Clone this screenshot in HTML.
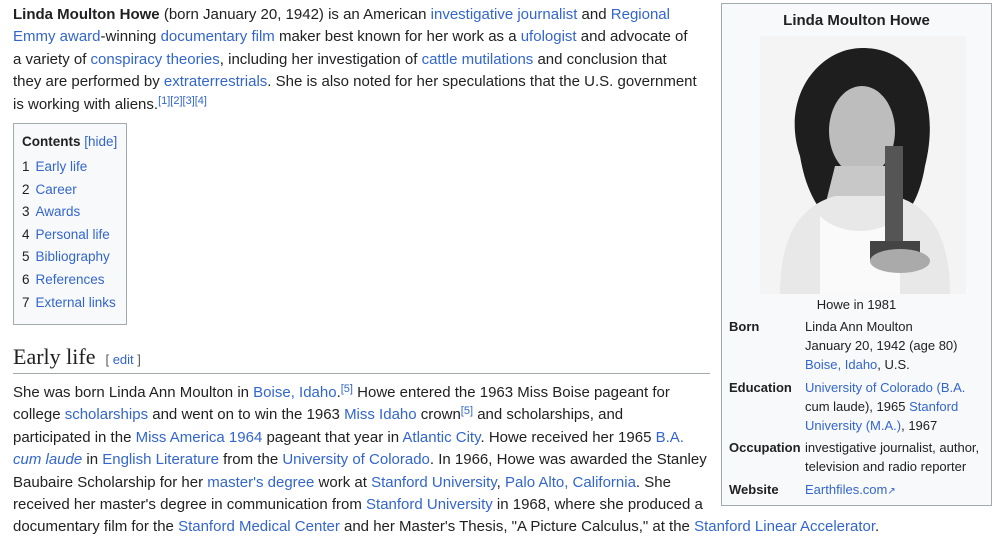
<!DOCTYPE html>
<html><head><meta charset="utf-8"><style>
body{margin:0;width:1007px;height:544px;background:#fff;font-family:"Liberation Sans",sans-serif;color:#202122;position:relative;overflow:hidden}
a{color:#3366cc;text-decoration:none}
.p{position:absolute;left:13px;font-size:15px;line-height:22.4px;white-space:nowrap;letter-spacing:0px}
sup{font-size:11px;line-height:0;vertical-align:5px}
.toc{position:absolute;left:13px;top:123px;width:112px;height:200px;border:1px solid #a2a9b1;background:#f8f9fa;font-size:13.5px}
.toc b{position:absolute;left:8px;top:10px}
.toc .h{font-weight:normal;color:#3366cc}
.toc div.i{position:absolute;left:8px}
.toc .n{color:#202122;margin-right:6px}
h2{position:absolute;left:13px;top:344px;margin:0;font-family:"Liberation Serif",serif;font-weight:normal;font-size:22px;width:697px;border-bottom:1px solid #a2a9b1;height:29px}
h2 span{font-family:"Liberation Sans",sans-serif;font-size:13px;color:#54595d;margin-left:10px}
.ib{position:absolute;left:721px;top:3px;width:269px;height:501px;border:1px solid #a2a9b1;background:#f8f9fa;font-size:13px;line-height:19px}
.ib .t{position:absolute;top:7px;width:100%;text-align:center;font-weight:bold;font-size:15px}
.ib .img{position:absolute;left:38px;top:32px;width:206px;height:258px;background:#fff}
.ib .cap{position:absolute;top:291px;width:100%;text-align:center}
.ib .l{position:absolute;left:7px;font-weight:bold}
.ib .d{position:absolute;left:83px;white-space:nowrap}
</style></head><body>
<div class="p" style="top:4px"><b>Linda Moulton Howe</b> (born January 20, 1942) is an American <a>investigative journalist</a> and <a>Regional</a><br><a>Emmy award</a>-winning <a>documentary film</a> maker best known for her work as a <a>ufologist</a> and advocate of<br>a variety of <a>conspiracy theories</a>, including her investigation of <a>cattle mutilations</a> and conclusion that<br>they are performed by <a>extraterrestrials</a>. She is also noted for her speculations that the U.S. government<br>is working with aliens.<sup><a>[1][2][3][4]</a></sup></div>
<div class="toc"><b>Contents <span class="h">[hide]</span></b>
<div class="i" style="top:35px"><span class="n">1</span><a>Early life</a></div>
<div class="i" style="top:58px"><span class="n">2</span><a>Career</a></div>
<div class="i" style="top:80px"><span class="n">3</span><a>Awards</a></div>
<div class="i" style="top:103px"><span class="n">4</span><a>Personal life</a></div>
<div class="i" style="top:125px"><span class="n">5</span><a>Bibliography</a></div>
<div class="i" style="top:148px"><span class="n">6</span><a>References</a></div>
<div class="i" style="top:171px"><span class="n">7</span><a>External links</a></div>
</div>
<h2>Early life<span>[ <a>edit</a> ]</span></h2>
<div class="p" style="top:382px">She was born Linda Ann Moulton in <a>Boise, Idaho</a>.<sup><a>[5]</a></sup> Howe entered the 1963 Miss Boise pageant for<br>college <a>scholarships</a> and went on to win the 1963 <a>Miss Idaho</a> crown<sup><a>[5]</a></sup> and scholarships, and<br>participated in the <a>Miss America 1964</a> pageant that year in <a>Atlantic City</a>. Howe received her 1965 <a>B.A.</a><br><a><i>cum laude</i></a> in <a>English Literature</a> from the <a>University of Colorado</a>. In 1966, Howe was awarded the Stanley<br>Baubaire Scholarship for her <a>master's degree</a> work at <a>Stanford University</a>, <a>Palo Alto, California</a>. She<br>received her master's degree in communication from <a>Stanford University</a> in 1968, where she produced a<br>documentary film for the <a>Stanford Medical Center</a> and her Master's Thesis, "A Picture Calculus," at the <a>Stanford Linear Accelerator</a>.</div>
<div class="ib"><div class="t">Linda Moulton Howe</div>
<div class="img"><svg width="206" height="258" viewBox="0 0 206 258">
<rect width="206" height="258" fill="#f4f4f4"/>
<path d="M40 120 C20 60 60 10 105 12 C160 14 180 70 165 130 C160 160 150 175 140 185 L70 185 C55 170 45 150 40 120Z" fill="#1e1e1e"/>
<ellipse cx="102" cy="95" rx="33" ry="45" fill="#bdbdbd"/>
<path d="M75 130 L130 130 L140 170 L65 170Z" fill="#c8c8c8"/>
<path d="M20 258 C20 200 40 170 75 160 L135 160 C170 170 190 200 190 258Z" fill="#e8e8e8"/>
<path d="M60 180 C80 200 120 200 140 180 L140 258 L60 258Z" fill="#fafafa"/>
<rect x="125" y="110" width="18" height="100" fill="#555"/>
<rect x="110" y="205" width="50" height="20" fill="#444"/>
<ellipse cx="140" cy="225" rx="30" ry="12" fill="#aaa"/>
</svg></div>
<div class="cap">Howe in 1981</div>
<div class="l" style="top:313px">Born</div>
<div class="d" style="top:313px">Linda Ann Moulton<br>January 20, 1942 (age 80)<br><a>Boise, Idaho</a>, U.S.</div>
<div class="l" style="top:374px">Education</div>
<div class="d" style="top:374px"><a>University of Colorado</a> <a>(B.A.</a><br>cum laude), 1965 <a>Stanford</a><br><a>University</a> <a>(M.A.)</a>, 1967</div>
<div class="l" style="top:434px">Occupation</div>
<div class="d" style="top:434px">investigative journalist, author,<br>television and radio reporter</div>
<div class="l" style="top:476px">Website</div>
<div class="d" style="top:476px"><a>Earthfiles.com</a><span style="color:#3366cc;font-size:10px">&#x2197;</span></div>
</div>
</body></html>
